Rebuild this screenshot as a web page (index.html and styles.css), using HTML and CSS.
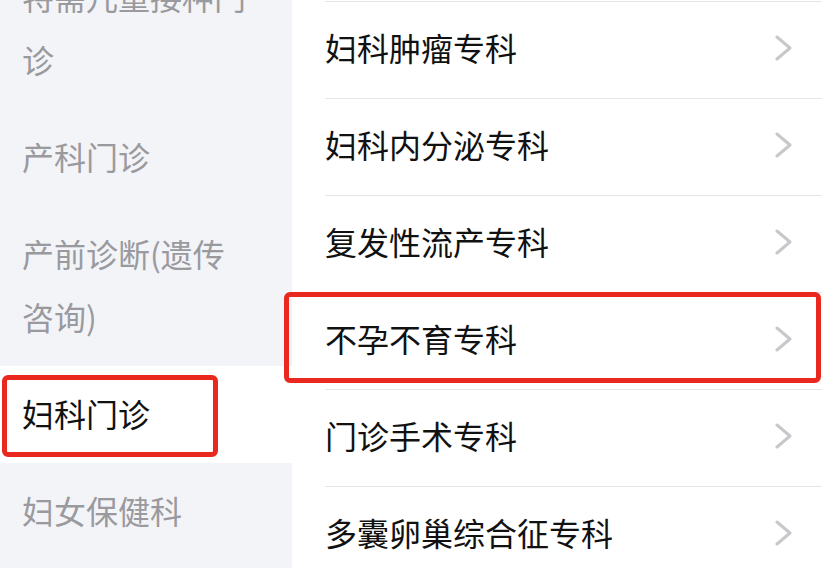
FILE: index.html
```html
<!doctype html>
<html>
	<head>
		<meta charset="utf-8">
		<link rel="stylesheet" href="styles.css">
	</head>
	<body>
		<div class="page">
			<div class="side">
				<div class="side-list">
					<div class="side-item">特需儿童接种门诊</div>
					<div class="side-item">产科门诊</div>
					<div class="side-item">产前诊断(遗传咨询)</div>
					<div class="side-item active">妇科门诊</div>
					<div class="side-item">妇女保健科</div>
				</div>
			</div>
			<div class="main">
				<div class="row"><span>妇科肿瘤专科</span><svg class="arrow" width="17" height="26" viewBox="0 0 17 26"><polyline points="2,2 15,13 2,24"/></svg></div>
				<div class="row"><span>妇科内分泌专科</span><svg class="arrow" width="17" height="26" viewBox="0 0 17 26"><polyline points="2,2 15,13 2,24"/></svg></div>
				<div class="row"><span>复发性流产专科</span><svg class="arrow" width="17" height="26" viewBox="0 0 17 26"><polyline points="2,2 15,13 2,24"/></svg></div>
				<div class="row"><span>不孕不育专科</span><svg class="arrow" width="17" height="26" viewBox="0 0 17 26"><polyline points="2,2 15,13 2,24"/></svg></div>
				<div class="row"><span>门诊手术专科</span><svg class="arrow" width="17" height="26" viewBox="0 0 17 26"><polyline points="2,2 15,13 2,24"/></svg></div>
				<div class="row"><span>多囊卵巢综合征专科</span><svg class="arrow" width="17" height="26" viewBox="0 0 17 26"><polyline points="2,2 15,13 2,24"/></svg></div>
			</div>
			<div class="mark mark-side"></div>
			<div class="mark mark-row"></div>
		</div>
	</body>
</html>
```

FILE: styles.css
```css
body
{
	margin: 0;
	background-color: #ffffff;
	font-family: "Noto Sans CJK SC", "Noto Sans", sans-serif;
	overflow: hidden;
}

.page
{
	position: relative;
	display: flex;
	height: 568px;
	overflow: hidden;
}

.side
{
	width: 292px;
	flex-shrink: 0;
	background-color: #f3f4f8;
	overflow: hidden;
}

.side-list
{
	margin-top: -51px;
}

.side-item
{
	padding: 16px 40px 18px 22px;
	font-size: 32px;
	line-height: 63px;
	color: #9a9a9e;
}

.side-item.active
{
	background-color: #ffffff;
	color: #111111;
}

.main
{
	flex: 1;
	padding-top: 1px;
	background-color: #ffffff;
}

.row
{
	display: flex;
	align-items: center;
	justify-content: space-between;
	box-sizing: border-box;
	height: 97px;
	margin-left: 33px;
	padding-right: 30px;
	padding-bottom: 6px;
	border-top: 1px solid #e6e6e8;
	font-size: 32px;
	color: #111111;
}

.arrow
{
	margin-top: 2px;
}

.arrow polyline
{
	fill: none;
	stroke: #c8c8cc;
	stroke-width: 3;
	stroke-linecap: round;
	stroke-linejoin: round;
}

.mark
{
	position: absolute;
	border: 5px solid #e9291f;
	border-radius: 6px;
	box-sizing: border-box;
}

.mark-side
{
	left: 2px;
	top: 375px;
	width: 216px;
	height: 82px;
}

.mark-row
{
	left: 284px;
	top: 292px;
	width: 537px;
	height: 91px;
}
```
